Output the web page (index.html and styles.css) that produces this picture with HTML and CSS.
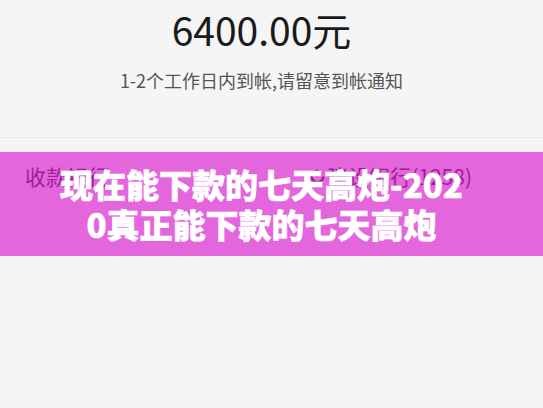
FILE: index.html
```
<!DOCTYPE html>
<html lang="zh">
<head>
<meta charset="utf-8">
<link rel="stylesheet" href="styles.css">
</head>
<body>
<div class="page">
  <section class="summary">
    <div class="amount">6400.00元</div>
    <div class="note">1-2个工作日内到帐,请留意到帐通知</div>
  </section>
  <section class="row">
    <span class="label">收款银行</span>
    <span class="bank">
      <svg class="logo" viewBox="0 0 16 16" width="15" height="15">
        <circle cx="8" cy="8" r="6.2" fill="none" stroke="#333" stroke-width="2.4" stroke-dasharray="30 9"/>
        <rect x="6.5" y="5" width="3" height="3" fill="#333"/>
      </svg>
      建设银行(1258)
    </span>
  </section>
  <div class="banner">
    <div class="title">现在能下款的七天高炮-2020真正能下款的七天高炮</div>
  </div>
</div>
</body>
</html>
```
FILE: styles.css
```
html, body {
  margin: 0;
  padding: 0;
  background: #f5f5f5;
}
.page {
  position: relative;
  width: 543px;
  height: 408px;
  overflow: hidden;
  font-family: "Noto Sans CJK SC", "Noto Sans", sans-serif;
}
.summary {
  width: 523px;
  height: 137px;
  box-sizing: border-box;
  padding-top: 5px;
  text-align: center;
}
.summary + .row {
  border-top: 1px solid #e6e6e6;
}
.amount {
  font-size: 39px;
  line-height: 48px;
  color: #1a1a1a;
}
.note {
  margin-top: 14px;
  font-size: 18px;
  line-height: 26px;
  color: #555;
}
.row {
  display: flex;
  justify-content: space-between;
  align-items: center;
  padding: 24px 71px 0 25px;
  font-size: 21px;
  line-height: 28px;
  color: #3a3a3a;
}
.bank {
  display: flex;
  align-items: center;
  gap: 2px;
}
.logo {
  display: block;
}
.banner {
  position: absolute;
  left: 0;
  top: 152px;
  width: 543px;
  height: 104px;
  box-sizing: border-box;
  padding: 12px 20px 12px 0;
  background: rgba(216, 14, 206, 0.62);
  display: flex;
  justify-content: center;
}
.title {
  width: 412px;
  text-align: center;
  color: #fff;
  font-weight: 900;
  font-size: 33px;
  line-height: 40px;
  word-break: break-all;
  -webkit-text-stroke: 0.6px #fff;
}
```
